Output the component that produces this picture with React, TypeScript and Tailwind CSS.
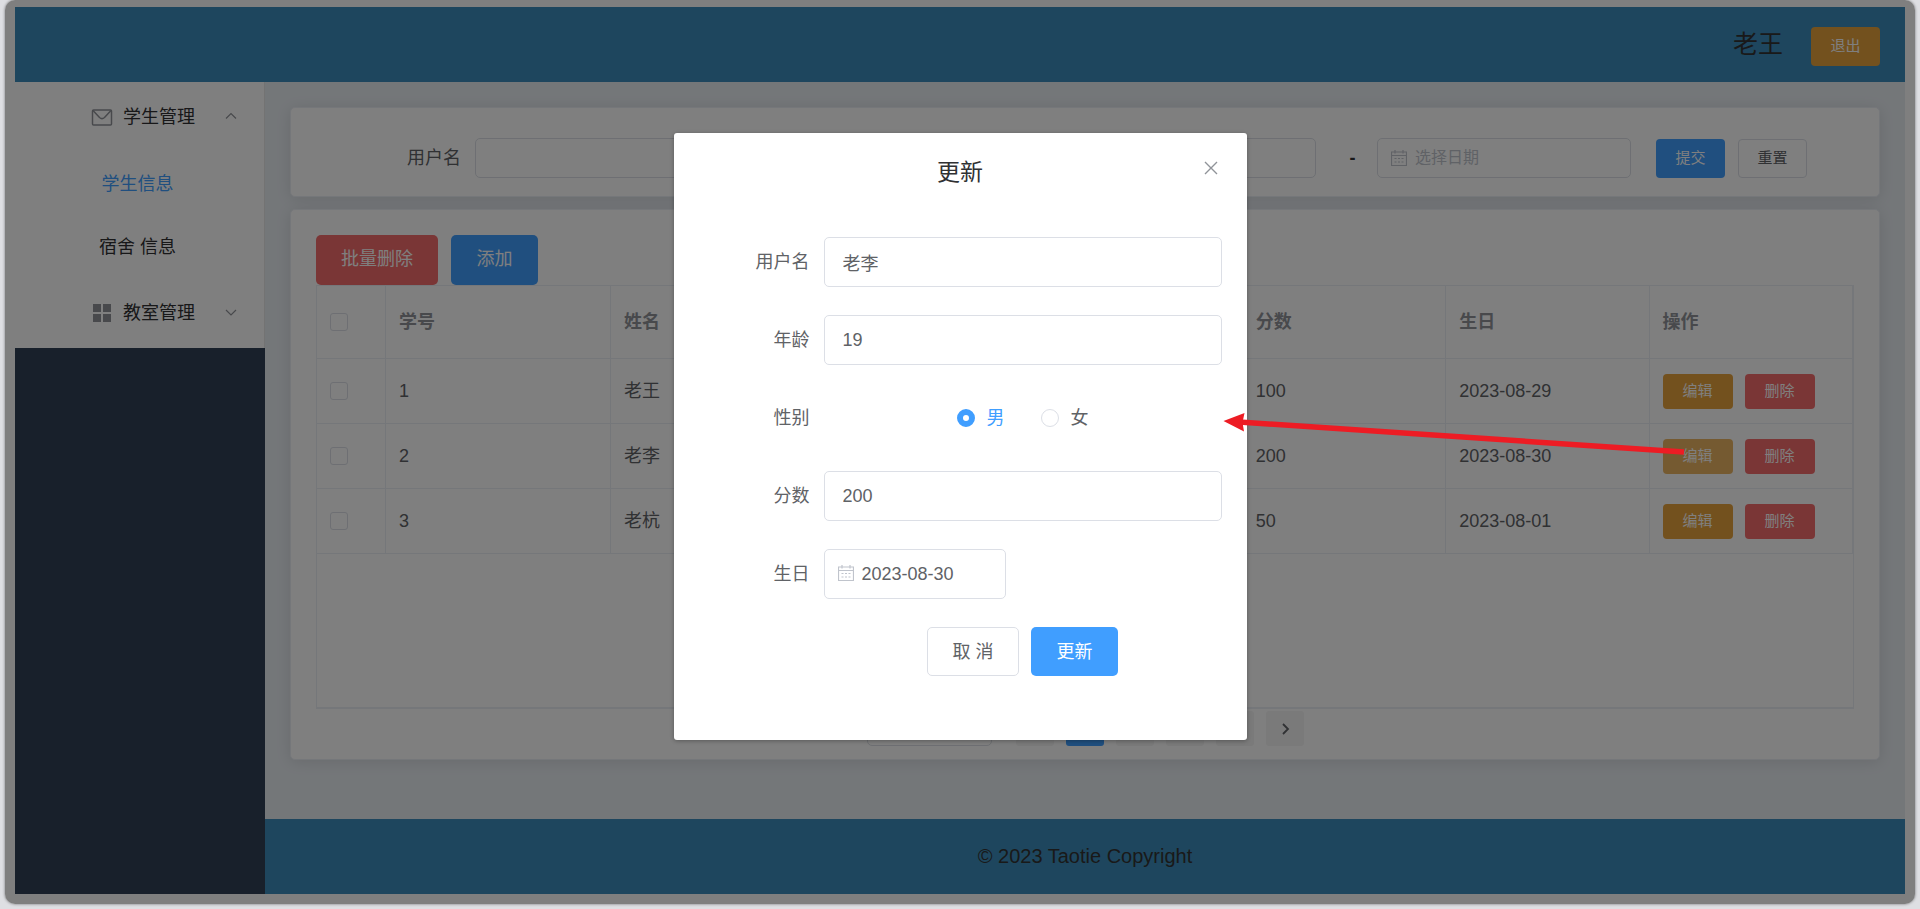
import { ChangeEvent, ReactNode, useState } from 'react'

const menuItems = ['学生信息', '宿舍 信息']

const columns = ['学号', '姓名', '性别', '年龄', '分数', '生日', '操作']

const students = [
  { id: 1, name: '老王', sex: '男', age: 18, score: 100, birthday: '2023-08-29' },
  { id: 2, name: '老李', sex: '男', age: 19, score: 200, birthday: '2023-08-30' },
  { id: 3, name: '老杭', sex: '女', age: 20, score: 50, birthday: '2023-08-01' },
]

const pages = [1, 2, 3, 4]

const inputStyle = 'rounded-[5px] border border-[#dcdfe6] bg-white text-[#606266] outline-none'

function CalendarIcon({ className }: { className: string }) {
  return (
    <svg viewBox="0 0 16 16" fill="none" stroke="#c0c4cc" className={className}>
      <path d="M.5 2h15v13.500H.5zM.5 5.500h15M4 0v3.500M12 0v3.500" strokeWidth="1.2" />
      <path d="M3.500 8.500h9M3.500 12h9" strokeWidth="1.2" strokeDasharray="2 1.500" />
    </svg>
  )
}

function Chevron({ d }: { d: string }) {
  return (
    <svg viewBox="0 0 12 12" fill="none" stroke="#909399" strokeWidth="1.2" className="size-3">
      <path d={d} />
    </svg>
  )
}

function Header() {
  return (
    <header className="flex h-[75px] items-center justify-end gap-7 bg-[#3c8dbc] pr-[25px]">
      <span className="text-[25px] text-[#333]">老王</span>
      <button className="mt-1 h-[39px] w-[69px] rounded bg-[#e6a23c] text-[15px] text-white">退出</button>
    </header>
  )
}

function SubMenu({ icon, title, arrow }: { icon: ReactNode; title: string; arrow: string }) {
  return (
    <button className="flex h-[70px] w-full items-center pr-[27px] pl-[76px] text-lg text-[#303133]">
      {icon}
      <span className="ml-2.5 flex-1 text-left">{title}</span>
      <Chevron d={arrow} />
    </button>
  )
}

function Sidebar() {
  return (
    <aside className="w-[250px] shrink-0 bg-[#304156]">
      <nav className="border-r border-[#e6e6e6] bg-white">
        <SubMenu
          title="学生管理"
          arrow="M1 7.500l5-5 5 5"
          icon={
            <svg viewBox="0 0 22 18" fill="none" stroke="#909399" strokeWidth="1.5" className="h-[18px] w-[22px]">
              <rect x="1.5" y="2" width="19" height="15" rx="1" />
              <path d="M2 2.500l6.500 7q2.500 2.200 5 0l6.500-7" />
            </svg>
          }
        />
        <ul>
          {menuItems.map((item, index) => (
            <li key={item} className="flex h-[63px] items-center justify-center pr-1 text-lg">
              <a href="#" className={index === 0 ? 'text-[#409eff]' : 'text-[#303133]'}>
                {item}
              </a>
            </li>
          ))}
        </ul>
        <SubMenu
          title="教室管理"
          arrow="M1 3l5 5 5-5"
          icon={
            <svg viewBox="0 0 22 18" fill="#909399" className="h-[18px] w-[22px]">
              <path d="M2 0h8v8H2zM12 0h8v8h-8zM2 10h8v8H2zM12 10h8v8h-8z" />
            </svg>
          }
        />
      </nav>
    </aside>
  )
}

function Card({ className = '', children }: { className?: string; children: ReactNode }) {
  return (
    <section className={`rounded-[5px] border border-[#ebeef5] bg-white shadow-[0_2px_15px_rgba(0,0,0,0.1)] ${className}`}>
      {children}
    </section>
  )
}

function DateFilter({ id }: { id: string }) {
  return (
    <div className="relative">
      <CalendarIcon className="absolute top-3 left-3.5 size-4" />
      <input
        id={id}
        aria-label="选择日期"
        placeholder="选择日期"
        className={`h-10 w-[254px] pl-[37px] text-base placeholder:text-[#c0c4cc] ${inputStyle}`}
      />
    </div>
  )
}

function SearchForm() {
  return (
    <form className="flex h-[88px] items-center pt-3 pr-[72px] pl-[116px] text-lg text-[#606266]">
      <label htmlFor="keyword" className="mr-3.5">用户名</label>
      <input id="keyword" className={`h-10 w-[254px] px-4 text-base ${inputStyle}`} />
      <label htmlFor="start" className="mr-3.5 ml-auto">生日</label>
      <DateFilter id="start" />
      <span className="w-[61px] pl-3 text-center font-bold text-[#303133]">-</span>
      <DateFilter id="end" />
      <button type="button" className="ml-[25px] h-[39px] w-[69px] rounded bg-[#409eff] text-[15px] text-white">提交</button>
      <button type="reset" className="ml-[13px] h-[39px] w-[69px] rounded border border-[#dcdfe6] bg-white text-[15px]">
        重置
      </button>
    </form>
  )
}

function StudentTable() {
  const cell = 'border-r border-b border-[#ebeef5] px-[13px]'
  const box = 'block size-[18px] appearance-none rounded-[3px] border border-[#dcdfe6] bg-white'

  return (
    <div className="h-[424px] border border-b-2 border-[#ebeef5]">
      <table className="w-full table-fixed border-separate border-spacing-0 text-left text-lg text-[#606266]">
        <colgroup>
          <col className="w-[69px]" />
          <col className="w-[225px]" />
          <col className="w-[225px]" />
          <col />
          <col />
          <col />
          <col />
          <col />
        </colgroup>
        <thead>
          <tr className="h-[73px] text-[#909399]">
            <th className={cell}>
              <input type="checkbox" aria-label="全选" className={box} />
            </th>
            {columns.map((column) => (
              <th key={column} className={`font-bold ${cell}`}>{column}</th>
            ))}
          </tr>
        </thead>
        <tbody>
          {students.map((student) => (
            <tr key={student.id} className="h-[65px]">
              <td className={cell}>
                <input type="checkbox" aria-label={student.name} className={box} />
              </td>
              <td className={cell}>{student.id}</td>
              <td className={cell}>{student.name}</td>
              <td className={cell}>{student.sex}</td>
              <td className={cell}>{student.age}</td>
              <td className={cell}>{student.score}</td>
              <td className={cell}>{student.birthday}</td>
              <td className={cell}>
                <div className="flex gap-3 text-[15px] text-white">
                  <button
                    className={`h-[35px] w-[70px] rounded ${student.id === 2 ? 'bg-[#ebb563]' : 'bg-[#e6a23c]'}`}
                  >
                    编辑
                  </button>
                  <button className="h-[35px] w-[70px] rounded bg-[#f56c6c]">删除</button>
                </div>
              </td>
            </tr>
          ))}
        </tbody>
      </table>
    </div>
  )
}

function Pagination() {
  const pageButton = 'flex h-[35px] w-[38px] items-center justify-center rounded-[3px]'

  return (
    <div className="mt-0.5 flex justify-center gap-3 text-base text-[#606266]">
      <select aria-label="每页条数" className={`mr-3 h-[35px] w-[125px] px-3 ${inputStyle}`}>
        <option>5条/页</option>
      </select>
      <button aria-label="上一页" className={`bg-[#f4f4f5] ${pageButton}`}>
        <svg viewBox="0 0 12 12" fill="none" stroke="#c0c4cc" strokeWidth="1.8" className="size-3">
          <path d="M8 1L3 6l5 5" />
        </svg>
      </button>
      {pages.map((page) => (
        <button key={page} className={`${page === 1 ? 'bg-[#409eff] text-white' : 'bg-[#f4f4f5]'} ${pageButton}`}>
          {page}
        </button>
      ))}
      <button aria-label="下一页" className={`bg-[#f4f4f5] ${pageButton}`}>
        <svg viewBox="0 0 12 12" fill="none" stroke="#606266" strokeWidth="1.8" className="size-3">
          <path d="M4 1l5 5-5 5" />
        </svg>
      </button>
    </div>
  )
}

function FormRow({ id, label, children }: { id?: string; label: string; children: ReactNode }) {
  return (
    <div className="flex min-h-[50px] items-center">
      <label htmlFor={id} className="w-[125px] shrink-0 pr-3.5 text-right">{label}</label>
      {children}
    </div>
  )
}

function UpdateDialog() {
  const [form, setForm] = useState({ name: '老李', age: '19', sex: '男', score: '200', birthday: '2023-08-30' })

  const change = (e: ChangeEvent<HTMLInputElement>) => setForm({ ...form, [e.target.name]: e.target.value })

  const field = `h-[50px] w-full min-w-0 px-[18px] ${inputStyle}`

  return (
    <div
      role="dialog"
      aria-label="更新"
      className="relative w-[30%] rounded-[3px] bg-white px-[25px] pt-6 pb-16 text-lg text-[#606266] shadow-[0_1px_4px_rgba(0,0,0,0.3)]"
    >
      <h2 className="text-center text-[23px] leading-[30px] text-[#303133]">更新</h2>
      <button aria-label="关闭" className="absolute top-[27px] right-7">
        <svg viewBox="0 0 16 16" fill="none" stroke="#909399" strokeWidth="1.4" className="size-4">
          <path d="M2 2l12 12M14 2L2 14" />
        </svg>
      </button>

      <form className="mt-[50px] flex flex-col gap-7">
        <FormRow id="name" label="用户名">
          <input id="name" name="name" value={form.name} onChange={change} className={field} />
        </FormRow>
        <FormRow id="age" label="年龄">
          <input id="age" name="age" value={form.age} onChange={change} className={field} />
        </FormRow>
        <FormRow label="性别">
          <div className="flex flex-1 justify-center gap-9">
            {['男', '女'].map((sex) => (
              <label key={sex} className="flex items-center gap-3 has-checked:text-[#409eff]">
                <input
                  type="radio"
                  name="sex"
                  value={sex}
                  checked={form.sex === sex}
                  onChange={change}
                  className="size-[18px] appearance-none rounded-full border border-[#dcdfe6] bg-white checked:border-[6px] checked:border-[#409eff]"
                />
                {sex}
              </label>
            ))}
          </div>
        </FormRow>
        <FormRow id="score" label="分数">
          <input id="score" name="score" value={form.score} onChange={change} className={field} />
        </FormRow>
        <FormRow id="birthday" label="生日">
          <div className="relative">
            <CalendarIcon className="absolute top-4 left-3.5 size-4" />
            <input
              id="birthday"
              name="birthday"
              value={form.birthday}
              onChange={change}
              className={`h-[50px] w-[182px] pl-[37px] ${inputStyle}`}
            />
          </div>
        </FormRow>
        <div className="flex justify-center gap-3 pl-[125px]">
          <button type="button" className={`h-[49px] w-[92px] ${inputStyle}`}>取 消</button>
          <button type="button" className="h-[49px] w-[87px] rounded-[5px] bg-[#409eff] text-white">更新</button>
        </div>
      </form>
    </div>
  )
}

export default function App() {
  return (
    <div className="min-h-screen bg-[#dedfe3] px-[5px] pb-1 font-['Liberation_Sans','Noto_Sans_CJK_SC',sans-serif] [&_button]:cursor-pointer">
      <div className="relative overflow-hidden rounded-[10px] bg-white px-2.5 pt-[7px] pb-2.5 shadow-[0_0_3px_rgba(0,0,0,0.5)]">
        <Header />
        <div className="flex">
          <Sidebar />
          <div className="min-w-0 flex-1">
            <main className="bg-[#e9eef3] px-[25px] pt-[25px] pb-[59px]">
              <Card>
                <SearchForm />
              </Card>
              <Card className="mt-3 px-[25px] pt-[25px] pb-[13px]">
                <div className="flex gap-[13px] text-lg text-white">
                  <button className="h-[50px] w-[122px] rounded-[5px] bg-[#f56c6c] pb-0.5">批量删除</button>
                  <button className="h-[50px] w-[87px] rounded-[5px] bg-[#409eff] pb-0.5">添加</button>
                </div>
                <StudentTable />
                <Pagination />
              </Card>
            </main>
            <footer className="flex h-[75px] items-center justify-center bg-[#3c8dbc] pb-0.5 text-xl text-[#333]">
              © 2023 Taotie Copyright
            </footer>
          </div>
        </div>

        <div className="absolute inset-0 flex items-start justify-center bg-black/50 pt-[133px]">
          <UpdateDialog />
        </div>

        {/* pointer from the edit button to the dialog */}
        <svg viewBox="0 0 464 44" className="absolute top-[412px] right-[230px] h-[44px] w-[464px]">
          <path d="M18 10L463 40" stroke="#ed1c24" strokeWidth="5.500" />
          <path d="M2.500 9L23.500 1l-2 9.500 1.500 9z" fill="#ed1c24" />
        </svg>
      </div>
    </div>
  )
}
